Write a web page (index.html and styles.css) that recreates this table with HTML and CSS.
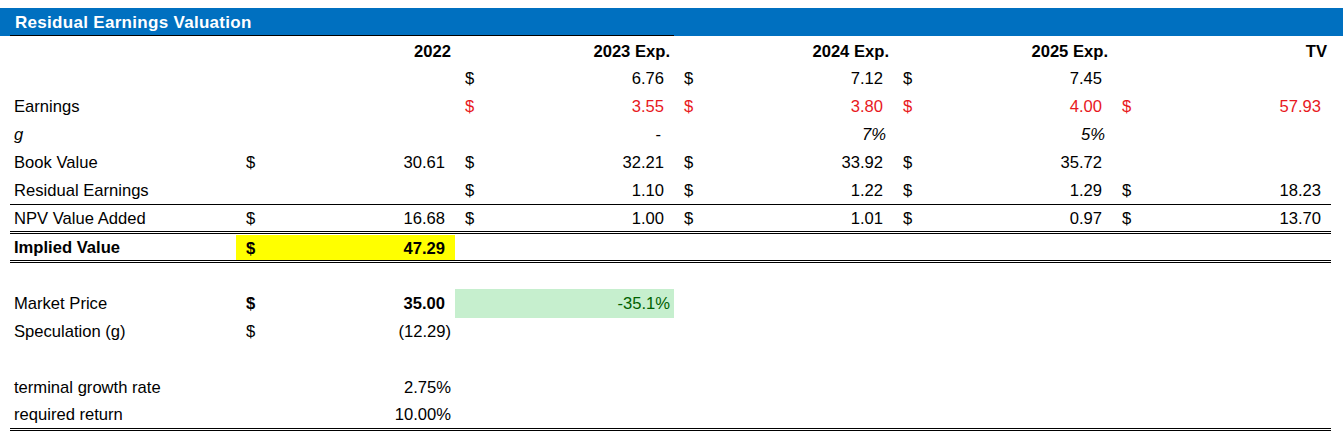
FILE: index.html
```html
<!DOCTYPE html>
<html lang="en">
<head>
<meta charset="utf-8">
<title>Residual Earnings Valuation</title>
<link rel="stylesheet" href="styles.css">
</head>
<body>
<div class="titlebar">
  <div class="title-grid">
    <div class="title">Residual Earnings Valuation</div>
  </div>
</div>
<div class="sheet">
  <div class="row r28 hdr">
    <div></div>
    <div class="h">2022</div>
    <div class="h">2023 Exp.</div>
    <div class="h">2024 Exp.</div>
    <div class="h">2025 Exp.</div>
    <div class="h">TV</div>
  </div>
  <div class="row r28">
    <div></div>
    <div></div>
    <div class="m"><span>$</span><span>6.76</span></div>
    <div class="m"><span>$</span><span>7.12</span></div>
    <div class="m"><span>$</span><span>7.45</span></div>
    <div></div>
  </div>
  <div class="row r28">
    <div class="lbl">Earnings</div>
    <div></div>
    <div class="m red"><span>$</span><span>3.55</span></div>
    <div class="m red"><span>$</span><span>3.80</span></div>
    <div class="m red"><span>$</span><span>4.00</span></div>
    <div class="m red"><span>$</span><span>57.93</span></div>
  </div>
  <div class="row r28">
    <div class="lbl it">g</div>
    <div></div>
    <div class="dash">-</div>
    <div class="pct it">7%</div>
    <div class="pct it">5%</div>
    <div></div>
  </div>
  <div class="row r28">
    <div class="lbl">Book Value</div>
    <div class="m"><span>$</span><span>30.61</span></div>
    <div class="m"><span>$</span><span>32.21</span></div>
    <div class="m"><span>$</span><span>33.92</span></div>
    <div class="m"><span>$</span><span>35.72</span></div>
    <div></div>
  </div>
  <div class="row r28 rule">
    <div class="lbl">Residual Earnings</div>
    <div></div>
    <div class="m"><span>$</span><span>1.10</span></div>
    <div class="m"><span>$</span><span>1.22</span></div>
    <div class="m"><span>$</span><span>1.29</span></div>
    <div class="m"><span>$</span><span>18.23</span></div>
  </div>
  <div class="row r26 dbl">
    <div class="lbl">NPV Value Added</div>
    <div class="m"><span>$</span><span>16.68</span></div>
    <div class="m"><span>$</span><span>1.00</span></div>
    <div class="m"><span>$</span><span>1.01</span></div>
    <div class="m"><span>$</span><span>0.97</span></div>
    <div class="m"><span>$</span><span>13.70</span></div>
  </div>
  <div class="row r26 dbl implied">
    <div class="lbl b">Implied Value</div>
    <div class="m b yellow"><span>$</span><span>47.29</span></div>
    <div></div>
    <div></div>
    <div></div>
    <div></div>
  </div>
  <div class="row r26"></div>
  <div class="row r28">
    <div class="lbl">Market Price</div>
    <div class="m b"><span>$</span><span>35.00</span></div>
    <div class="good">-35.1%</div>
    <div></div>
    <div></div>
    <div></div>
  </div>
  <div class="row r28">
    <div class="lbl">Speculation (g)</div>
    <div class="m paren"><span>$</span><span>(12.29)</span></div>
    <div></div>
    <div></div>
    <div></div>
    <div></div>
  </div>
  <div class="row r28"></div>
  <div class="row r28">
    <div class="lbl">terminal growth rate</div>
    <div class="num4">2.75%</div>
    <div></div>
    <div></div>
    <div></div>
    <div></div>
  </div>
  <div class="row r27 dbl">
    <div class="lbl">required return</div>
    <div class="num4">10.00%</div>
    <div></div>
    <div></div>
    <div></div>
    <div></div>
  </div>
</div>
</body>
</html>
```

FILE: styles.css
```css
html, body {
  margin: 0;
  padding: 0;
  background: #ffffff;
}

body {
  padding-top: 8px;
  font-family: "Liberation Sans", Arial, sans-serif;
  font-size: 16.6px;
  color: #000000;
}

.titlebar {
  background: #0070c0;
  height: 28px;
  padding-left: 10px;
}

.title-grid {
  display: grid;
  grid-template-columns: 664px;
}

.title {
  height: 28px;
  box-sizing: border-box;
  border-bottom: 1px solid #000000;
  padding-left: 5px;
  line-height: 29px;
  color: #ffffff;
  font-weight: bold;
  font-size: 17px;
  letter-spacing: 0.3px;
  white-space: nowrap;
}

.sheet {
  margin-left: 10px;
  width: 1321px;
}

.row {
  display: grid;
  grid-template-columns: 226px repeat(5, 219px);
  white-space: nowrap;
}

.r28 { height: 28px; line-height: 29px; }
.r27 { height: 27px; line-height: 28px; }
.r26 { height: 26px; line-height: 27px; }

.rule { border-bottom: 1px solid #000000; }
.dbl { border-bottom: 3px double #000000; }

.hdr { line-height: 32px; }

.h {
  text-align: right;
  padding-right: 4px;
  font-weight: bold;
}

.lbl {
  padding-left: 4px;
}

.it { font-style: italic; }
.b { font-weight: bold; }

.m {
  display: flex;
  justify-content: space-between;
  padding: 0 10px 0 10px;
}

.m.paren {
  padding-right: 4px;
}

.red { color: #e8191e; }

.pct {
  text-align: right;
  padding-right: 7px;
}

.dash {
  text-align: right;
  padding-right: 13px;
}

.num4 {
  text-align: right;
  padding-right: 4px;
}

.yellow {
  background: #ffff00;
  height: 25px;
  margin-top: 1px;
}

.good {
  background: #c6efce;
  color: #006100;
  text-align: right;
  padding-right: 4px;
}
```
